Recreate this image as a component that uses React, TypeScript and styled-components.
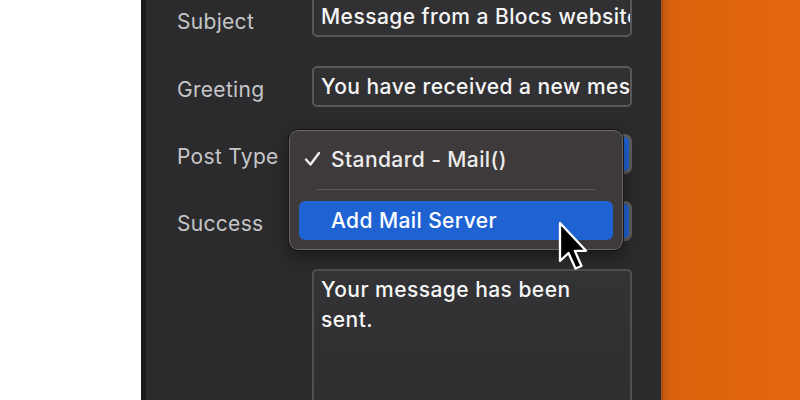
import React from "react";
import styled, { createGlobalStyle } from "styled-components";

const Global = createGlobalStyle`
  html, body { margin: 0; padding: 0; background: #ffffff; }
  body { font-family: Inter, "Noto Sans", "Liberation Sans", sans-serif; }
  #root { width: 800px; height: 400px; overflow: hidden; }
`;

const Page = styled.div`
  display: flex;
  width: 800px;
  height: 400px;
  overflow: hidden;
`;

const Blank = styled.div`
  width: 141px;
  flex: none;
  background: #ffffff;
`;

const Window = styled.div`
  width: 455px;
  flex: none;
  border-left: 5px solid #1b1b1d;
  background: #2b2b2d;
  padding: 0 29px 0 31px;
  box-sizing: content-box;
  position: relative;
`;

const Desktop = styled.div`
  flex: 1;
  background: linear-gradient(90deg, #a94c10 0px, #cc5c0e 4px, #dc630d 14px, #e3670c 100%);
`;

const Form = styled.div`
  display: grid;
  grid-template-columns: 135px 320px;
  align-items: start;
  margin-top: -4px;
`;

const Label = styled.div<{ $top: number; $drop?: number }>`
  grid-column: 1;
  margin-top: ${(p) => p.$top}px;
  height: 41px;
  box-sizing: border-box;
  padding-top: ${(p) => p.$drop ?? 4}px;
  display: flex;
  align-items: center;
  color: #c6c6c8;
  font-size: 21px;
  letter-spacing: 0.3px;
`;

const Field = styled.div<{ $top: number }>`
  grid-column: 2;
  margin-top: ${(p) => p.$top}px;
  position: relative;
`;

const TextInput = styled.div`
  height: 41px;
  box-sizing: border-box;
  border: 2px solid #58585b;
  border-radius: 5px;
  background: #313134;
  color: #f6f6f6;
  font-size: 21px;
  font-weight: 500;
  line-height: 36px;
  padding: 1px 2px 0 7px;
  white-space: nowrap;
  overflow: hidden;
  letter-spacing: 0.45px;
`;

const Select = styled.div`
  height: 40px;
  box-sizing: border-box;
  border-radius: 7px;
  background: #5e5e61;
  display: flex;
  justify-content: flex-end;
  padding: 3px 3px 3px 0;
`;

const SelectCap = styled.div`
  width: 20px;
  border-radius: 0 5px 5px 0;
  background: #1f64d6;
`;

const TextArea = styled.div`
  height: 160px;
  box-sizing: border-box;
  border: 2px solid #505053;
  border-radius: 5px;
  background: linear-gradient(180deg, #333336, #2e2e31);
  color: #f6f6f6;
  font-size: 21px;
  font-weight: 500;
  line-height: 30px;
  padding: 4px 7px;
  letter-spacing: 0.45px;
`;

const Menu = styled.div`
  position: absolute;
  left: -23px;
  top: -4px;
  width: 334px;
  height: 120px;
  box-sizing: border-box;
  background: #3e3a3b;
  border: 1.5px solid #68676a;
  outline: 1px solid #161618;
  border-radius: 9px;
  box-shadow: 0 6px 16px rgba(0, 0, 0, 0.45);
  padding: 9px 9px;
  display: flex;
  flex-direction: column;
  z-index: 2;
`;

const MenuItem = styled.div<{ $active?: boolean }>`
  height: 40px;
  display: flex;
  align-items: center;
  border-radius: 6px;
  background: ${(p) => (p.$active ? "#1f63d3" : "transparent")};
  color: ${(p) => (p.$active ? "#ffffff" : "#ececec")};
  font-size: 21px;
  font-weight: 500;
  letter-spacing: 0.4px;
  padding-left: 5px;
`;

const Check = styled.span`
  width: 27px;
  display: inline-flex;
  align-items: center;
`;

const Separator = styled.div`
  height: 2px;
  margin: 10px 18px 11px 18px;
  background: #5d5a5b;
`;

const Cursor = styled.svg`
  position: absolute;
  left: 411px;
  top: 221px;
  z-index: 3;
`;

export default function App() {
  return (
    <>
      <Global />
      <Page>
        <Blank />
        <Window>
          <Form>
            <Label $top={0} $drop={10}>Subject</Label>
            <Field $top={0}>
              <TextInput>Message from a Blocs website</TextInput>
            </Field>
            <Label $top={29} $drop={6}>Greeting</Label>
            <Field $top={29}>
              <TextInput>You have received a new message</TextInput>
            </Field>
            <Label $top={27}>Post Type</Label>
            <Field $top={27}>
              <Select>
                <SelectCap />
              </Select>
              <Menu>
                <MenuItem>
                  <Check>
                    <svg width="17" height="16" viewBox="0 0 17 16">
                      <path
                        d="M2 8.5 L6.5 13.5 L15 2"
                        fill="none"
                        stroke="#ececec"
                        strokeWidth="2.4"
                        strokeLinecap="round"
                        strokeLinejoin="round"
                      />
                    </svg>
                  </Check>
                  Standard - Mail()
                </MenuItem>
                <Separator />
                <MenuItem $active>
                  <Check />
                  Add Mail Server
                </MenuItem>
              </Menu>
            </Field>
            <Label $top={26}>Success</Label>
            <Field $top={26}>
              <Select>
                <SelectCap />
              </Select>
            </Field>
            <Field $top={27}>
              <TextArea>
                Your message has been
                <br />
                sent.
              </TextArea>
            </Field>
          </Form>
          <Cursor width="36" height="54" viewBox="0 0 36 54">
            <path
              d="M3 2 L3 40 L11.5 32 L18.5 47.5 L24.5 45 L17.8 29.8 L29 29.8 Z"
              fill="#000"
              stroke="#fff"
              strokeWidth="2.3"
              strokeLinejoin="round"
            />
          </Cursor>
        </Window>
        <Desktop />
      </Page>
    </>
  );
}
